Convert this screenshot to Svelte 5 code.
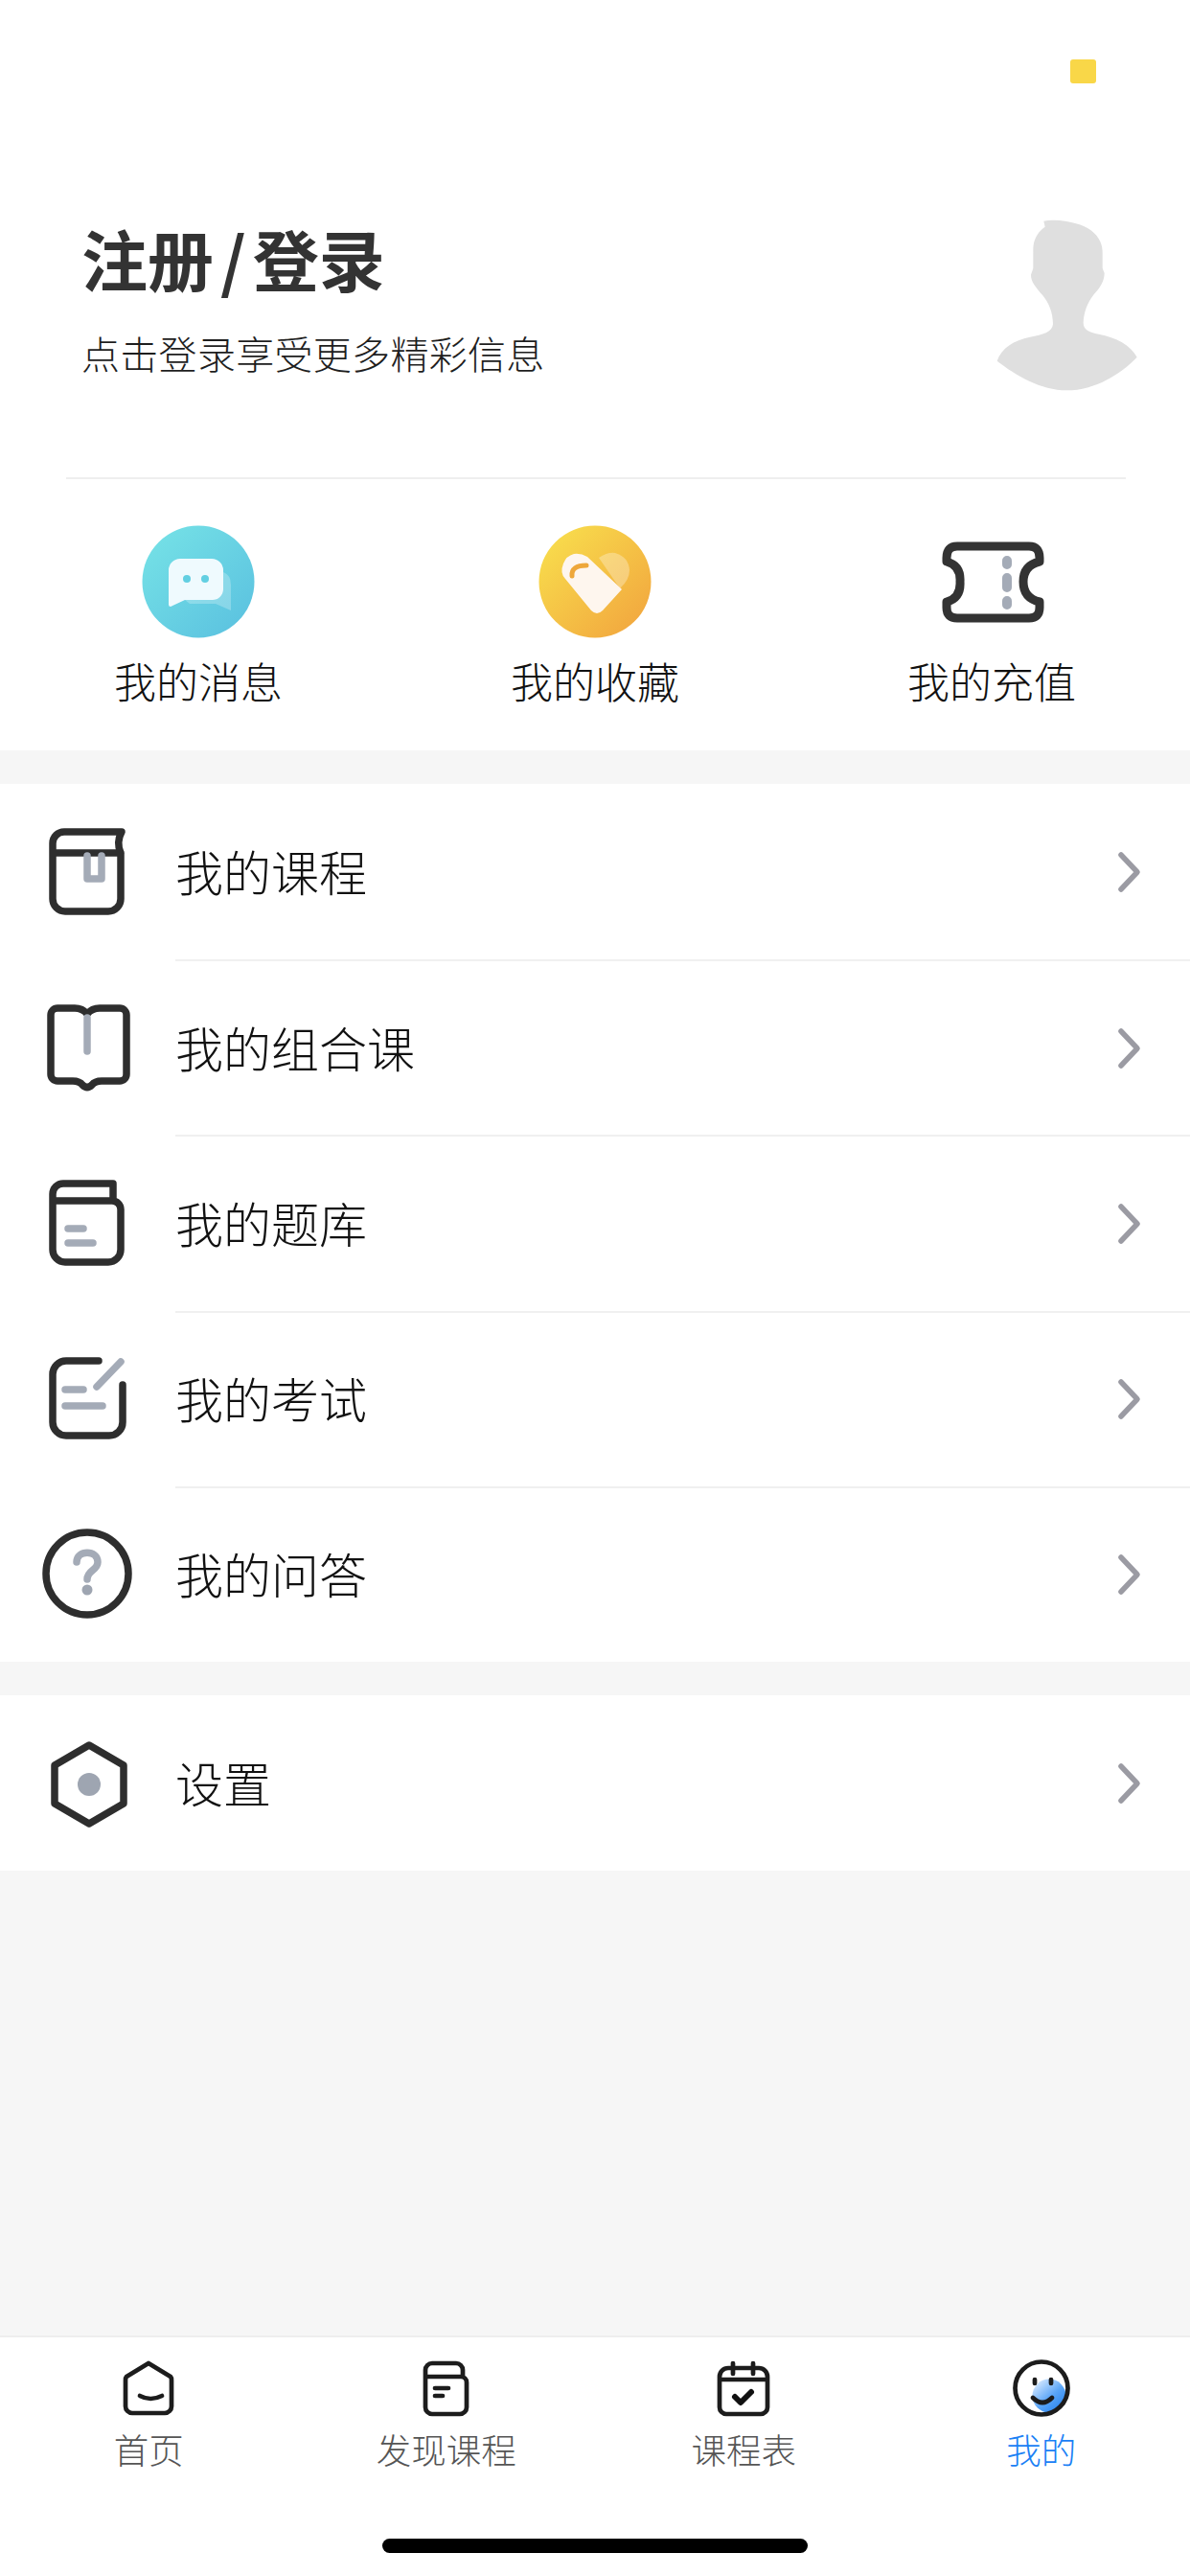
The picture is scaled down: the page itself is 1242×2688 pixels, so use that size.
<script>
	const tabs = [
		{ label: '首页', icon: tabHome },
		{ label: '发现课程', icon: tabFind },
		{ label: '课程表', icon: tabCalendar },
		{ label: '我的', icon: tabMe, active: true }
	];
</script>

{#snippet courseIcon()}
	<svg class="row-icon" viewBox="0 0 100 100">
		<path class="ink" d="M13 30V78a13 13 0 0 0 13 13H71a13 13 0 0 0 13-13V30H13V20a12 12 0 0 1 12-12H85Q79 19 84 30" />
		<path class="mute" d="M49 33V57H64V33" />
	</svg>
{/snippet}

{#snippet bundleIcon()}
	<svg class="row-icon" viewBox="0 0 100 100">
		<path class="ink" d="M49 15Q44 9 36 9H18a7 7 0 0 0-7 7V78a7 7 0 0 0 7 7H34Q41 85 44 89Q49 94 54 89Q57 85 64 85H83a7 7 0 0 0 7-7V16a7 7 0 0 0-7-7H62Q54 9 49 15Z" />
		<path class="mute" d="M49 19V54" />
	</svg>
{/snippet}

{#snippet bankIcon()}
	<svg class="row-icon" viewBox="0 0 100 100">
		<path class="ink" d="M13 27V78a13 13 0 0 0 13 13H71a13 13 0 0 0 13-13V36a9 9 0 0 0-9-9H13V20a11 11 0 0 1 11-11H76V27" />
		<path class="mute" d="M29 56H45M29 71H55" />
	</svg>
{/snippet}

{#snippet examIcon()}
	<svg class="row-icon" viewBox="0 0 100 100">
		<path class="ink" d="M61 11H27a14 14 0 0 0-14 14V75a14 14 0 0 0 14 14H72a14 14 0 0 0 14-14V36" />
		<path class="mute" d="M59 38L84 12M26 41H45M26 58H65" />
	</svg>
{/snippet}

{#snippet askIcon()}
	<svg class="row-icon" viewBox="0 0 100 100">
		<circle class="ink" cx="49" cy="50" r="43" />
		<path class="mute" d="M38 38C38 25 60 25 60 38C60 47 49 46 49 56" />
		<circle class="mute-fill" cx="49" cy="67" r="5.5" />
	</svg>
{/snippet}

{#snippet settingIcon()}
	<svg class="row-icon" viewBox="0 0 100 100">
		<path class="ink" d="M51 10L87 31V71L51 92L15 71V31Z" />
		<circle class="mute-fill" cx="51" cy="51" r="12" />
	</svg>
{/snippet}

{#snippet row(label, icon)}
	<div class="row">
		{@render icon()}
		<div class="row-body">
			<span class="row-label">{label}</span>
			<svg class="chevron" viewBox="0 0 30 46"><path d="M6 5L23 23L6 41" /></svg>
		</div>
	</div>
{/snippet}

{#snippet tabHome()}
	<svg class="tab-icon" viewBox="0 0 72 72">
		<path class="tab-ink" d="M36 8L59 22Q60 23 60 26V53a7 7 0 0 1-7 7H19a7 7 0 0 1-7-7V26Q12 23 13 22Z" />
		<path class="tab-ink" d="M27 42Q38 48 50 42" />
	</svg>
{/snippet}

{#snippet tabFind()}
	<svg class="tab-icon" viewBox="0 0 72 72">
		<path class="tab-ink" d="M14 22V54a7 7 0 0 0 7 7H50a7 7 0 0 0 7-7V28a6 6 0 0 0-6-6H14V15a7 7 0 0 1 7-7H46a7 7 0 0 1 7 7V22" />
		<path class="tab-ink" d="M24 34H38M24 42H32" />
	</svg>
{/snippet}

{#snippet tabCalendar()}
	<svg class="tab-icon" viewBox="0 0 72 72">
		<path class="tab-ink" d="M20 13H52a9 9 0 0 1 9 9V54a7 7 0 0 1-7 7H18a7 7 0 0 1-7-7V22a9 9 0 0 1 9-9ZM11 25H61M25 8V19M46 8V19" />
		<path class="tab-ink check" d="M27 43L33 49L44 38" />
	</svg>
{/snippet}

{#snippet tabMe()}
	<svg class="tab-icon" viewBox="0 0 72 72">
		<defs>
			<linearGradient id="me-blue" x1="0.15" y1="0.1" x2="0.85" y2="0.9">
				<stop offset="0" stop-color="#cfe5ff" />
				<stop offset="0.55" stop-color="#5aa5f7" />
				<stop offset="1" stop-color="#2b86f0" />
			</linearGradient>
		</defs>
		<circle cx="44" cy="42" r="17.5" fill="url(#me-blue)" />
		<circle class="tab-ink" cx="36" cy="34" r="27.5" />
		<path class="tab-ink" d="M29 25V29M46 25V29" />
		<path class="tab-ink" d="M27 44Q37 54 47 44" />
	</svg>
{/snippet}

<div class="page">
	<main class="main">
		<section class="profile">
			<div class="status"><span class="status-dot"></span></div>

			<div class="hero">
				<div class="hero-text">
					<h1 class="title">注册<span class="slash">/</span>登录</h1>
					<p class="subtitle">点击登录享受更多精彩信息</p>
				</div>
				<svg class="avatar" viewBox="0 0 660 660">
					<path d="M268 92C300 85 345 92 380 103C425 118 452 150 452 190V240L458 255C458 280 445 300 425 322C405 348 394 375 392 410C392 432 410 440 440 446C495 456 540 480 560 518C510 570 430 622 340 622C260 622 180 575 122 530C135 490 175 465 225 455C265 448 295 440 297 415C297 380 285 350 265 325C245 300 228 285 228 260L235 240V180C235 150 250 125 272 110Z" />
				</svg>
			</div>

			<div class="divider"></div>

			<div class="quick">
				<div class="quick-item">
					<svg class="quick-icon" viewBox="0 0 135 135">
						<defs>
							<linearGradient id="msg-bg" x1="0.1" y1="0.1" x2="0.9" y2="0.9">
								<stop offset="0" stop-color="#74e0e6" />
								<stop offset="1" stop-color="#5cc3e0" />
							</linearGradient>
						</defs>
						<circle cx="67" cy="67" r="58.5" fill="url(#msg-bg)" />
						<path fill="#fff" fill-opacity="0.25" d="M93 57Q101 60 101 70V97L85 90H58L53 86H82a11 11 0 0 0 11-11Z" />
						<path fill="#effafe" d="M48 43H81a12 12 0 0 1 12 12V75a11 11 0 0 1-11 11H53L38 93Q36 93 36 91V55a12 12 0 0 1 12-12Z" />
						<circle cx="55" cy="64" r="4" fill="#62cfe2" />
						<circle cx="74" cy="64" r="4" fill="#62cfe2" />
					</svg>
					<span class="quick-label">我的消息</span>
				</div>

				<div class="quick-item">
					<svg class="quick-icon" viewBox="0 0 135 135">
						<defs>
							<linearGradient id="fav-bg" x1="0.1" y1="0.1" x2="0.9" y2="0.9">
								<stop offset="0" stop-color="#f8dc4c" />
								<stop offset="1" stop-color="#f2a83f" />
							</linearGradient>
						</defs>
						<circle cx="67" cy="67" r="58.5" fill="url(#fav-bg)" />
						<path fill="#fff" fill-opacity="0.3" d="M71 42Q80 36 88 37Q102 41 103 55Q103 65 93 74Z" />
						<path fill="#fef6ee" d="M34 48Q30 58 36 64L63 97Q69 103 75 97L95 75L59 41Q52 37 45 38Q37 40 34 48Z" />
						<path fill="none" stroke="#eea73a" stroke-width="5" stroke-linecap="round" d="M43 61Q42 50 58 50" />
					</svg>
					<span class="quick-label">我的收藏</span>
				</div>

				<div class="quick-item">
					<svg class="quick-icon" viewBox="0 0 135 135">
						<path class="ticket" d="M31 30H106Q117 30 117 42V46Q100 50 100 67Q100 84 117 88V94Q117 105 106 105H31Q20 105 20 94V88Q35 84 34 67Q35 50 20 46V42Q20 30 31 30Z" />
						<path class="ticket-dash" d="M83 45V49M83 63V73M83 87V91" />
					</svg>
					<span class="quick-label">我的充值</span>
				</div>
			</div>
		</section>

		<section class="card">
			{@render row('我的课程', courseIcon)}
			{@render row('我的组合课', bundleIcon)}
			{@render row('我的题库', bankIcon)}
			{@render row('我的考试', examIcon)}
			{@render row('我的问答', askIcon)}
		</section>

		<section class="card">
			{@render row('设置', settingIcon)}
		</section>
	</main>

	<nav class="tabbar">
		<div class="tabs">
			{#each tabs as tab}
				<div class="tab" class:active={tab.active}>
					{@render tab.icon()}
					<span class="tab-label">{tab.label}</span>
				</div>
			{/each}
		</div>
		<div class="home-indicator"></div>
	</nav>
</div>

<style>
	:global(body) {
		margin: 0;
		background: #f6f6f6;
	}

	.page {
		display: flex;
		flex-direction: column;
		width: 1242px;
		height: 2688px;
		font-family: 'Noto Sans CJK SC', 'Noto Sans', sans-serif;
		color: #333;
	}

	.main {
		flex: 1;
		background: #f6f6f6;
	}

	.profile {
		background: #fff;
		padding-top: 62px;
	}

	.status {
		display: flex;
		justify-content: flex-end;
		padding-right: 98px;
		margin-bottom: 113px;
	}

	.status-dot {
		width: 27px;
		height: 25px;
		border-radius: 3px;
		background: #f9d748;
	}

	.hero {
		display: flex;
		justify-content: space-between;
		padding: 0 22px 0 85px;
		margin-bottom: 78px;
	}

	.title {
		margin: 19px 0 0;
		font-size: 69px;
		line-height: 100px;
		font-weight: 600;
		color: #333;
	}

	.slash {
		margin: 0 7px;
	}

	.subtitle {
		margin: 19px 0 0;
		font-size: 40px;
		letter-spacing: 0.3px;
		line-height: 60px;
		font-weight: 300;
		color: #1e1e1e;
	}

	.avatar {
		width: 220px;
		height: 220px;
	}

	.avatar path {
		fill: #dfdfdf;
	}

	.divider {
		height: 2px;
		margin: 0 67px 0 69px;
		background: #eee;
	}

	.quick {
		display: flex;
		padding: 40px 0 41px;
	}

	.quick-item {
		flex: 1;
		display: flex;
		flex-direction: column;
		align-items: center;
	}

	.quick-icon {
		width: 135px;
		height: 135px;
	}

	.quick-label {
		margin: 5px 0 2px;
		font-size: 44px;
		line-height: 60px;
		font-weight: 300;
		color: #111;
	}

	.ticket {
		fill: none;
		stroke: #333;
		stroke-width: 9;
		stroke-linejoin: round;
	}

	.ticket-dash {
		fill: none;
		stroke: #a4abb7;
		stroke-width: 10;
		stroke-linecap: round;
	}

	.card {
		margin-top: 35px;
		background: #fff;
	}

	.row {
		display: flex;
		align-items: center;
		height: 183.2px;
		padding-left: 42px;
	}

	.row-icon {
		flex: none;
		width: 100px;
		height: 100px;
		margin-right: 41px;
	}

	.ink {
		fill: none;
		stroke: #2e2e2e;
		stroke-width: 7.5;
		stroke-linecap: round;
		stroke-linejoin: round;
	}

	.mute {
		fill: none;
		stroke: #a4abb7;
		stroke-width: 7.5;
		stroke-linecap: round;
		stroke-linejoin: round;
	}

	.mute-fill {
		fill: #9ea5b1;
	}

	.row-body {
		flex: 1;
		align-self: stretch;
		display: flex;
		align-items: center;
		justify-content: space-between;
		padding-right: 48px;
	}

	.row + .row .row-body {
		border-top: 2px solid #f0f0f0;
	}

	.row-label {
		padding-bottom: 4px;
		font-size: 50px;
		line-height: 70px;
		font-weight: 300;
		color: #111;
	}

	.chevron {
		width: 30px;
		height: 46px;
	}

	.chevron path {
		fill: none;
		stroke: #9b9ba3;
		stroke-width: 5.5;
		stroke-linecap: round;
		stroke-linejoin: round;
	}

	.tabbar {
		display: flex;
		flex-direction: column;
		align-items: center;
		height: 251px;
		box-sizing: border-box;
		border-top: 2px solid #eee;
		background: #fff;
	}

	.tabs {
		display: flex;
		width: 100%;
		padding-top: 19px;
	}

	.tab {
		flex: 1;
		display: flex;
		flex-direction: column;
		align-items: center;
	}

	.tab-icon {
		width: 72px;
		height: 72px;
	}

	.tab-ink {
		fill: none;
		stroke: #1c1c1c;
		stroke-width: 4.7;
		stroke-linecap: round;
		stroke-linejoin: round;
	}

	.check {
		stroke: #111;
		stroke-width: 6;
	}

	.tab-label {
		margin: 1px 0 2px;
		font-size: 36.5px;
		line-height: 50px;
		font-weight: 300;
		color: #555;
	}

	.active .tab-label {
		color: #1a80f5;
	}

	.home-indicator {
		width: 444px;
		height: 15px;
		margin-top: 66px;
		border-radius: 8px;
		background: #000;
	}
</style>
